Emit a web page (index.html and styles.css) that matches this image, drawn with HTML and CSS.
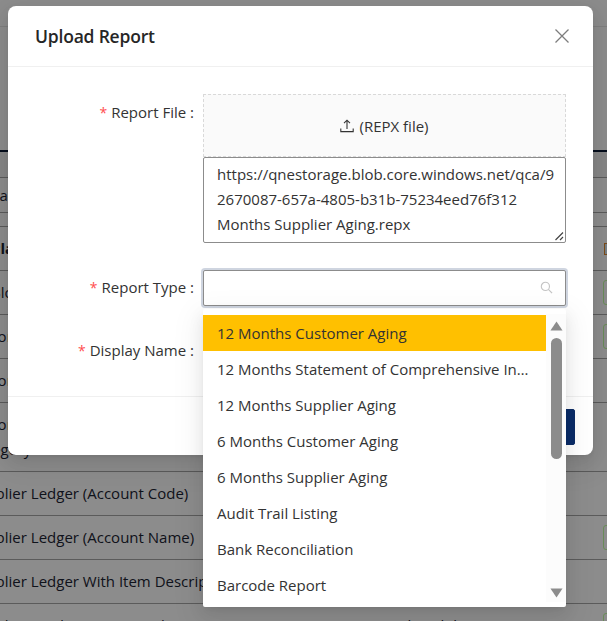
FILE: index.html
```html
<!DOCTYPE html>
<html lang="en">
<head>
<meta charset="utf-8">
<title>Upload Report</title>
<link rel="stylesheet" href="styles.css">
</head>
<body>
<div class="bg">
  <div class="bg-top"></div>
  <div class="bg-head"></div>
  <div class="row r-head"></div>
  <div class="row r-a"><span>Trace</span></div>
  <div class="row r-gap"></div>
  <div class="row r-b r-bold"><span>Plan</span><i class="mark"></i></div>
  <div class="row r-b r-lo"><span>Block</span><i class="chip"></i></div>
  <div class="row r-b"><span>Factor</span><i class="chip"></i></div>
  <div class="row r-b"><span>Factor</span></div>
  <div class="row r-c"><span>Factor by<br>Category</span></div>
  <div class="row r-b"><span>Supplier Ledger (Account Code)</span></div>
  <div class="row r-b"><span>Supplier Ledger (Account Name)</span><i class="chip"></i></div>
  <div class="row r-b"><span>Supplier Ledger With Item Description</span></div>
  <div class="row r-last"><span class="c1">Supplier Credit Note Journal</span><span class="c2">QNE Optimum Sales Blob</span><i class="chip"></i></div>
</div>
<div class="overlay"></div>
<div class="modal">
  <header class="modal-head">
    <h1 class="modal-title">Upload Report</h1>
    <svg class="close" viewBox="0 0 14 14" width="14" height="14"><path d="M0.5 0.5L13.5 13.5M13.5 0.5L0.5 13.5" fill="none" stroke="#7d7d7d" stroke-width="1.3"/></svg>
  </header>
  <div class="modal-body">
    <div class="field">
      <label class="label label-file"><span class="star">*</span>Report File :</label>
      <div class="control">
        <div class="drop">
          <svg class="upload" viewBox="0 0 14 14" width="14" height="14"><path d="M7 10V1.5M4 4.2L7 1.2L10 4.2M0.8 9.5V12.6H13.2V9.5" fill="none" stroke="#333" stroke-width="1.1"/></svg>
          <span>(REPX file)</span>
        </div>
        <div class="textarea">https://qnestorage.blob.core.windows.net/qca/9<br>2670087-657a-4805-b31b-75234eed76f312<br>Months Supplier Aging.repx
          <svg class="grip" viewBox="0 0 10 10" width="10" height="10"><path d="M1.5 9L9 1.5M6 9L9 6" fill="none" stroke="#444" stroke-width="1.2"/></svg>
        </div>
      </div>
    </div>
    <div class="field">
      <label class="label"><span class="star">*</span>Report Type :</label>
      <div class="control">
        <div class="input focus">
          <svg class="search" viewBox="0 0 14 14" width="13" height="13"><circle cx="5.8" cy="5.8" r="4.4" fill="none" stroke="#c4c4c4" stroke-width="1.2"/><path d="M9 9L13 13" stroke="#c4c4c4" stroke-width="1.3"/></svg>
        </div>
      </div>
    </div>
    <div class="field">
      <label class="label"><span class="star">*</span>Display Name :</label>
      <div class="control"><div class="input"></div></div>
    </div>
  </div>
  <footer class="modal-foot"><button class="btn">Save</button></footer>
</div>
<div class="dropdown">
  <ul class="options">
    <li class="opt active">12 Months Customer Aging</li>
    <li class="opt">12 Months Statement of Comprehensive Income</li>
    <li class="opt">12 Months Supplier Aging</li>
    <li class="opt">6 Months Customer Aging</li>
    <li class="opt">6 Months Supplier Aging</li>
    <li class="opt">Audit Trail Listing</li>
    <li class="opt">Bank Reconciliation</li>
    <li class="opt">Barcode Report</li>
  </ul>
  <div class="scrollbar">
    <svg class="arrow" viewBox="0 0 14 10" width="13" height="10" preserveAspectRatio="none"><path d="M7 0.5L13.5 9.5H0.5Z" fill="#8c8c8c"/></svg>
    <div class="thumb"></div>
    <svg class="arrow arrow-down" viewBox="0 0 14 10" width="13" height="10" preserveAspectRatio="none"><path d="M7 9.5L13.5 0.5H0.5Z" fill="#8c8c8c"/></svg>
  </div>
</div>
</body>
</html>
```

FILE: styles.css
```css
* { box-sizing: border-box; }
html, body { margin: 0; height: 100%; }
body {
  position: relative;
  width: 607px;
  height: 621px;
  overflow: hidden;
  background: #fff;
  font-family: "Open Sans", "Noto Sans", sans-serif;
  font-size: 15px;
  letter-spacing: 0;
  color: #333;
}

/* page behind the dialog */
.bg { width: 607px; height: 621px; overflow: hidden; color: #1c2433; }
.bg-top { height: 27px; border-bottom: 1px solid #e6e6e6; }
.bg-head { height: 125px; border-bottom: 2px solid #0b1a33; }
.row {
  --shift: -31px;
  display: flex;
  align-items: center;
  margin-left: var(--shift);
  width: calc(607px - var(--shift));
  position: relative;
  border-bottom: 1px solid #a6a6a6;
}
.row span { white-space: nowrap; line-height: 25px; }
.r-head { --shift: 0px; height: 26px; background: #f5f5f5; }
.r-a { --shift: -15px; height: 35px; }
.r-gap { height: 14px; }
.r-b { height: 44px; }
.r-bold { --shift: -9px; font-weight: 700; }
.r-lo { --shift: -9px; }
.r-c { height: 69px; }
.r-last { height: 40px; align-items: flex-start; padding-top: 9px; border-bottom: 0; }
.c1 { width: 316px; }
.chip {
  position: absolute;
  right: -26px;
  top: 9px;
  width: 30px;
  height: 25px;
  border: 1px solid #c0ffa0;
  border-radius: 3px;
}
.r-last .chip { top: 9px; }
.mark {
  position: absolute;
  right: -11px;
  top: 16px;
  width: 14px;
  height: 12px;
  border: 1px solid #e08a30;
  background: #dbe9f4;
}

.overlay { position: absolute; inset: 0; background: rgba(0, 0, 0, 0.45); }

/* dialog */
.modal {
  position: absolute;
  left: 8px;
  top: 6px;
  width: 585px;
  height: 449px;
  background: #fff;
  border-radius: 8px;
  box-shadow: 0 3px 6px -4px rgba(0,0,0,.12), 0 6px 16px 0 rgba(0,0,0,.08), 0 9px 28px 8px rgba(0,0,0,.05);
  display: flex;
  flex-direction: column;
}
.modal-head {
  height: 61px;
  padding: 0 24px 0 27px;
  display: flex;
  align-items: center;
  justify-content: space-between;
  border-bottom: 1px solid #f0f0f0;
}
.modal-title {
  margin: 0;
  font-size: 17.5px;
  font-weight: 600;
  letter-spacing: -0.2px;
  color: #262626;
}
.modal-body {
  flex: 1;
  padding-top: 27px;
  display: flex;
  flex-direction: column;
  gap: 27px;
}
.field { display: flex; }
.label {
  width: 195px;
  padding: 6px 9px 0 0;
  text-align: right;
  white-space: nowrap;
  line-height: 22px;
}
.label-file { padding-top: 7px; }
.star { color: #ff4d4f; margin-right: 4px; font-size: 14px; }
.control { width: 363px; }
.drop {
  height: 63px;
  background: #fafafa;
  border: 1px dashed #d9d9d9;
  display: flex;
  align-items: center;
  justify-content: center;
  gap: 5px;
}
.upload { flex: none; }
.textarea {
  position: relative;
  height: 86px;
  padding: 4px 13px;
  border: 1px solid #8c8c8c;
  border-radius: 2px;
  line-height: 25.2px;
  white-space: nowrap;
  background: #fff;
}
.grip { position: absolute; right: 1px; bottom: 1px; }
.input {
  position: relative;
  height: 36px;
  background: #fff;
  border: 1px solid #d9d9d9;
  border-radius: 2px;
}
.focus {
  border-color: #8c8c8c;
  box-shadow: 0 0 0 2px rgba(13, 45, 102, 0.2);
}
.search { position: absolute; right: 12px; top: 10px; }
.modal-foot {
  height: 59px;
  padding: 12px 18px 0 0;
  border-top: 1px solid #f0f0f0;
  display: flex;
  justify-content: flex-end;
}
.btn {
  width: 90px;
  height: 36px;
  border: 1px solid #0d2d66;
  border-radius: 2px;
  background: #0b2d69;
  color: #fff;
  font: inherit;
}

/* open select list */
.dropdown {
  position: absolute;
  left: 203px;
  top: 309px;
  width: 363px;
  height: 298px;
  background: #fff;
  border-radius: 2px;
  box-shadow: 0 3px 6px -4px rgba(0,0,0,.12), 0 6px 16px 0 rgba(0,0,0,.08), 0 9px 28px 8px rgba(0,0,0,.05);
  padding-top: 6px;
  display: flex;
}
.options { list-style: none; margin: 0; padding: 0; width: 343px; }
.opt {
  height: 36px;
  line-height: 37px;
  padding: 0 14px;
  white-space: nowrap;
  overflow: hidden;
  text-overflow: ellipsis;
}
.active { background: #ffc000; }
.scrollbar {
  position: relative;
  width: 20px;
  margin-top: -1px;
  height: 288px;
  background: #fcfcfc;
  display: flex;
  flex-direction: column;
  align-items: center;
}
.arrow { flex: none; margin-top: 7px; }
.thumb {
  width: 11px;
  height: 121px;
  margin-top: 7px;
  background: #8c8c8c;
  border-radius: 6px;
}
.arrow-down { margin-top: auto; margin-bottom: 4px; }
```
